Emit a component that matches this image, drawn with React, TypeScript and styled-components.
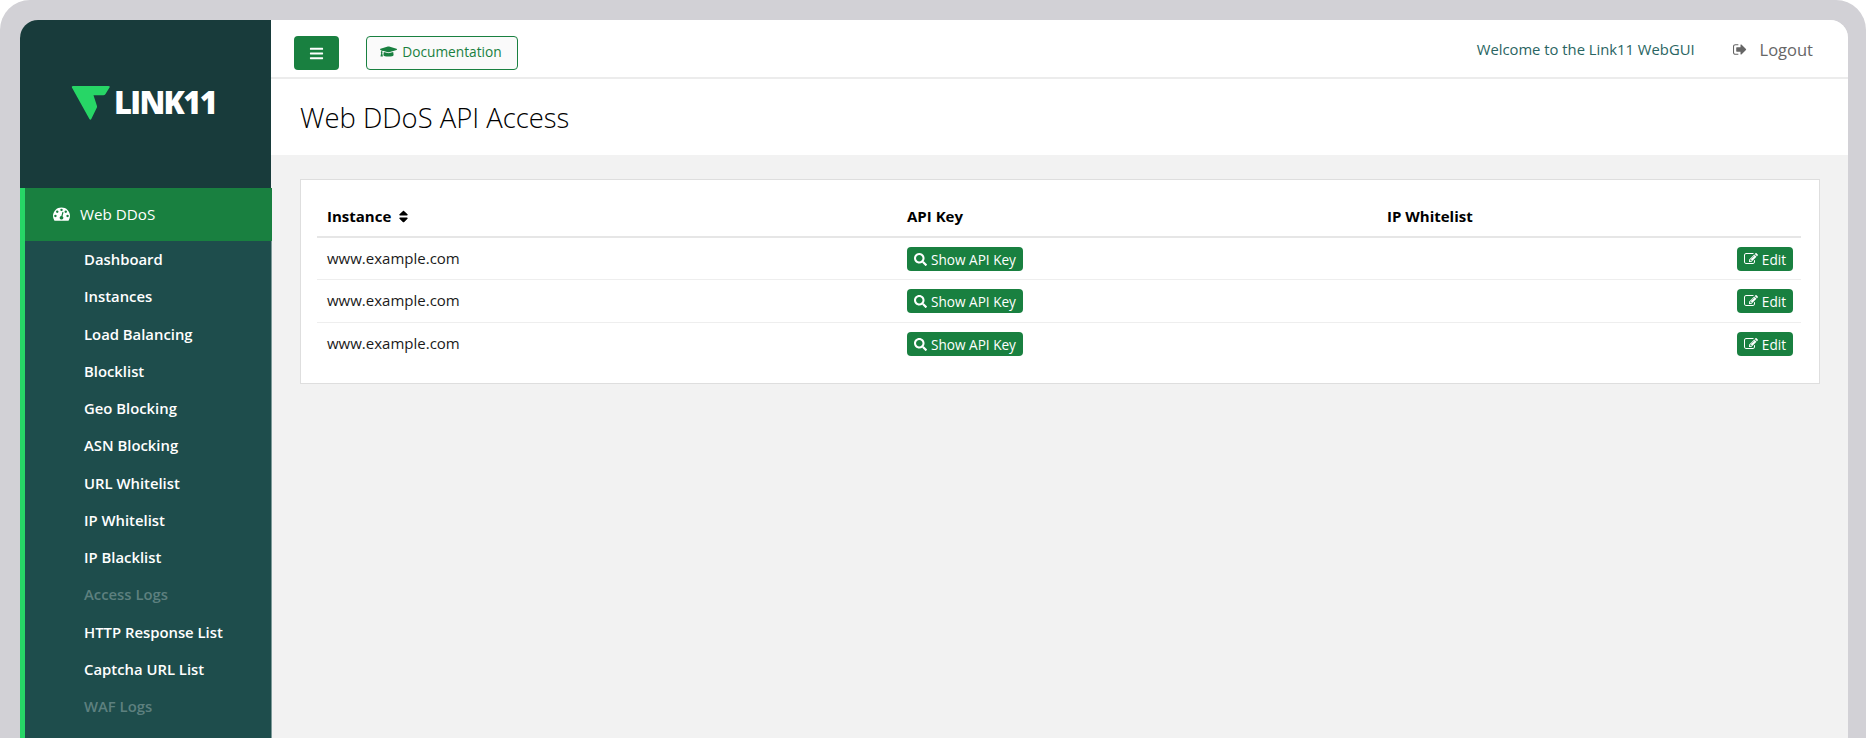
import React from "react";
import styled, { createGlobalStyle } from "styled-components";
import { FaBars, FaGraduationCap, FaSearch, FaSort } from "react-icons/fa";

const GlobalStyle = createGlobalStyle`
  html, body {
    margin: 0;
    height: 738px;
    overflow: hidden;
    background: #ffffff;
    font-family: "Open Sans", "Liberation Sans", sans-serif;
  }
`;

const Shell = styled.div`
  height: 738px;
  box-sizing: border-box;
  padding: 20px 18px 0 20px;
  background: #d2d1d6;
  border-radius: 30px 30px 0 0;
  overflow: hidden;
`;
const Frame = styled.div`
  height: 718px;
  display: flex;
  border-radius: 18px 18px 0 0;
  overflow: hidden;
  background: #f2f2f2;
`;
const Sidebar = styled.aside`
  position: relative;
  z-index: 1;
  flex: 0 0 252px;
  display: flex;
  flex-direction: column;
`;
const Brand = styled.div`
  flex: 0 0 168px;
  margin-right: 1px;
  display: flex;
  align-items: flex-start;
  padding: 65px 0 0 51px;
  box-sizing: border-box;
  background: #183b3b;
`;
const LogoText = styled.span`
  margin: -4px 0 0 3px;
  font-size: 31px;
  line-height: 42px;
  font-weight: 800;
  letter-spacing: -1.7px;
  color: #ffffff;
`;
const Menu = styled.nav`
  flex: 1;
  background: #1e4d4c;
  border-left: 5px solid #27d666;
  border-right: 1px solid #7d9a99;
`;
const ActiveItem = styled.div`
  height: 53px;
  margin-right: -1px;
  display: flex;
  align-items: center;
  gap: 10px;
  padding: 0 0 2px 28px;
  box-sizing: border-box;
  background: #198040;
  color: #ffffff;
  font-size: 15.2px;
`;
const MenuLink = styled.div<{ $disabled?: boolean }>`
  height: 37.25px;
  line-height: 37.25px;
  padding-left: 59px;
  font-size: 14.85px;
  font-weight: 600;
  color: ${(p) => (p.$disabled ? "#5d807f" : "#ffffff")};
`;
const Main = styled.main`
  flex: 1;
  min-width: 0;
  margin-left: -1px;
  display: flex;
  flex-direction: column;
`;
const TopBar = styled.header`
  flex: 0 0 59px;
  display: flex;
  align-items: center;
  padding: 1px 35px 0 23px;
  box-sizing: border-box;
  background: #ffffff;
  border-bottom: 2px solid #ececec;
`;
const ToggleButton = styled.button`
  width: 45px;
  height: 34px;
  margin-top: 8px;
  display: flex;
  align-items: center;
  justify-content: center;
  padding: 0;
  border: 0;
  border-radius: 4px;
  background: #198040;
  color: #ffffff;
  font-size: 15px;
`;
const DocButton = styled.button`
  width: 152px;
  height: 34px;
  margin: 8px 0 0 27px;
  display: flex;
  align-items: center;
  justify-content: center;
  gap: 5px;
  padding: 0 2px 3px 0;
  box-sizing: border-box;
  border: 1px solid #198040;
  border-radius: 4px;
  background: #fafafa;
  color: #198040;
  font-family: inherit;
  font-size: 13.7px;
`;
const Welcome = styled.span`
  margin-left: auto;
  font-size: 14.8px;
  color: #2a6562;
`;
const Logout = styled.span`
  margin-left: 38px;
  display: flex;
  align-items: center;
  gap: 12px;
  font-size: 16.5px;
  color: #666666;
`;
const TitleBand = styled.div`
  flex: 0 0 76px;
  display: flex;
  align-items: center;
  padding: 0 0 0 29px;
  background: #ffffff;
`;
const Title = styled.h1`
  margin: 0;
  font-size: 27.4px;
  font-weight: 300;
  color: #000000;
`;
const Content = styled.div`
  flex: 1;
  padding: 24px 28px 0 29px;
  background: #f2f2f2;
`;
const Card = styled.section`
  padding: 16px 18px 18.5px 16px;
  background: #ffffff;
  border: 1.5px solid #dedede;
`;
const Table = styled.table`
  width: 100%;
  table-layout: fixed;
  border-collapse: collapse;
  font-size: 15px;
  color: #1a1a1a;
`;
const HeadCell = styled.th<{ $width?: number }>`
  width: ${(p) => (p.$width ? `${p.$width}px` : "auto")};
  height: 41px;
  padding: 0 9px 0 10px;
  box-sizing: border-box;
  text-align: left;
  font-weight: 700;
  color: #000000;
  border-bottom: 2px solid #e6e6e6;
`;
const SortIcon = styled(FaSort)`
  margin-left: 5px;
  font-size: 15px;
  vertical-align: -2px;
`;
const Row = styled.tr`
  height: 42.5px;
  border-bottom: 1px solid #eeeeee;
  &:last-child {
    border-bottom: 0;
  }
`;
const Cell = styled.td<{ $right?: boolean }>`
  padding: 0 8px 0 10px;
  text-align: ${(p) => (p.$right ? "right" : "left")};
`;
const NameCell = styled(Cell)`
  padding-bottom: 2px;
`;
const SmallButton = styled.button`
  height: 24px;
  margin-top: 1px;
  display: inline-flex;
  align-items: center;
  gap: 4px;
  padding: 0 7px;
  vertical-align: middle;
  border: 0;
  border-radius: 4px;
  background: #198040;
  color: #ffffff;
  font-family: inherit;
  font-size: 13.6px;
`;

const GaugeIcon = () => (
  <svg width="17" height="17" viewBox="0 0 1792 1792" fill="currentColor">
    <path d="M384 1152q0-53-37.5-90.5t-90.5-37.5-90.5 37.5-37.5 90.5 37.5 90.5 90.5 37.5 90.5-37.5 37.5-90.5zm192-448q0-53-37.5-90.5t-90.5-37.5-90.5 37.5-37.5 90.5 37.5 90.5 90.5 37.5 90.5-37.5 37.5-90.5zm428 481l101-382q6-26-7.5-48.5t-38.5-29.5-48 6.5-30 39.5l-101 382q-60 5-107 43.5t-63 98.5q-20 77 20 146t117 89 146-20 89-117q16-60-6-117t-72-91zm660-33q0-53-37.5-90.5t-90.5-37.5-90.5 37.5-37.5 90.5 37.5 90.5 90.5 37.5 90.5-37.5 37.5-90.5zm-640-640q0-53-37.5-90.5t-90.5-37.5-90.5 37.5-37.5 90.5 37.5 90.5 90.5 37.5 90.5-37.5 37.5-90.5zm448 192q0-53-37.5-90.5t-90.5-37.5-90.5 37.5-37.5 90.5 37.5 90.5 90.5 37.5 90.5-37.5 37.5-90.5zm320 448q0 261-141 483-19 29-54 29h-1402q-35 0-54-29-141-221-141-483 0-182 71-348t191-286 286-191 348-71 348 71 286 191 191 286 71 348z" />
  </svg>
);

const SignOutIcon = () => (
  <svg width="15" height="15" viewBox="0 0 1792 1792" fill="currentColor">
    <path d="M640 1440q0 4 1 20t.5 26.5-3 23.5-10 19.5-20.5 6.5h-320q-119 0-203.5-84.5t-84.5-203.5v-704q0-119 84.5-203.5t203.5-84.5h320q13 0 22.5 9.5t9.5 22.5q0 4 1 20t.5 26.5-3 23.5-10 19.5-20.5 6.5h-320q-66 0-113 47t-47 113v704q0 66 47 113t113 47h312l11.5 1 11.5 3 8 5.5 7 9 2 13.5zm928-544q0 26-19 45l-544 544q-19 19-45 19t-45-19-19-45v-288h-448q-26 0-45-19t-19-45v-384q0-26 19-45t45-19h448v-288q0-26 19-45t45-19 45 19l544 544q19 19 19 45z" />
  </svg>
);

const EditIcon = () => (
  <svg width="14" height="14" viewBox="0 0 1792 1792" fill="currentColor">
    <path d="M888 1184l116-116-152-152-116 116v56h96v96h56zm440-720q-16-16-33 1l-350 350q-17 17-1 33t33-1l350-350q17-17 1-33zm80 594v190q0 119-84.5 203.5t-203.5 84.5h-832q-119 0-203.5-84.5t-84.5-203.5v-832q0-119 84.5-203.5t203.5-84.5h832q63 0 117 25 15 7 18 23 3 17-9 29l-49 49q-14 14-32 8-23-6-45-6h-832q-66 0-113 47t-47 113v832q0 66 47 113t113 47h832q66 0 113-47t47-113v-126q0-13 9-22l64-64q15-15 35-7t20 29zm-96-738l288 288-672 672h-288v-288zm444 132l-92 92-288-288 92-92q28-28 68-28t68 28l152 152q28 28 28 68t-28 68z" />
  </svg>
);

const LogoMark = () => (
  <svg width="40" height="36" viewBox="0 0 40 36" fill="#27d666">
    <path d="M2 1h35.5q2 0 1 1.6l-4 6.4q-.8 1.2-2.2 1.2H22.5l3.4 10.5q.3 1 0 1.7l-5.6 11.6q-.9 1.6-1.9 0L.9 2.6Q.2 1 2 1z" />
  </svg>
);

const menuItems: { label: string; disabled?: boolean }[] = [
  { label: "Dashboard" },
  { label: "Instances" },
  { label: "Load Balancing" },
  { label: "Blocklist" },
  { label: "Geo Blocking" },
  { label: "ASN Blocking" },
  { label: "URL Whitelist" },
  { label: "IP Whitelist" },
  { label: "IP Blacklist" },
  { label: "Access Logs", disabled: true },
  { label: "HTTP Response List" },
  { label: "Captcha URL List" },
  { label: "WAF Logs", disabled: true },
  { label: "WAF Rules" },
];

const instances = ["www.example.com", "www.example.com", "www.example.com"];

const App = () => {
  return (
    <Shell>
      <GlobalStyle />
      <Frame>
        <Sidebar>
          <Brand>
            <LogoMark />
            <LogoText>LINK11</LogoText>
          </Brand>
          <Menu>
            <ActiveItem>
              <GaugeIcon />
              Web DDoS
            </ActiveItem>
            {menuItems.map((item) => (
              <MenuLink key={item.label} $disabled={item.disabled}>
                {item.label}
              </MenuLink>
            ))}
          </Menu>
        </Sidebar>
        <Main>
          <TopBar>
            <ToggleButton>
              <FaBars />
            </ToggleButton>
            <DocButton>
              <FaGraduationCap size={17} />
              Documentation
            </DocButton>
            <Welcome>Welcome to the Link11 WebGUI</Welcome>
            <Logout>
              <SignOutIcon />
              Logout
            </Logout>
          </TopBar>
          <TitleBand>
            <Title>Web DDoS API Access</Title>
          </TitleBand>
          <Content>
            <Card>
              <Table>
                <thead>
                  <tr>
                    <HeadCell $width={580}>
                      Instance
                      <SortIcon />
                    </HeadCell>
                    <HeadCell $width={480}>API Key</HeadCell>
                    <HeadCell>IP Whitelist</HeadCell>
                    <HeadCell $width={100} />
                  </tr>
                </thead>
                <tbody>
                  {instances.map((name, i) => (
                    <Row key={i}>
                      <NameCell>{name}</NameCell>
                      <Cell>
                        <SmallButton>
                          <FaSearch size={13} />
                          Show API Key
                        </SmallButton>
                      </Cell>
                      <Cell />
                      <Cell $right>
                        <SmallButton>
                          <EditIcon />
                          Edit
                        </SmallButton>
                      </Cell>
                    </Row>
                  ))}
                </tbody>
              </Table>
            </Card>
          </Content>
        </Main>
      </Frame>
    </Shell>
  );
};

export default App;
